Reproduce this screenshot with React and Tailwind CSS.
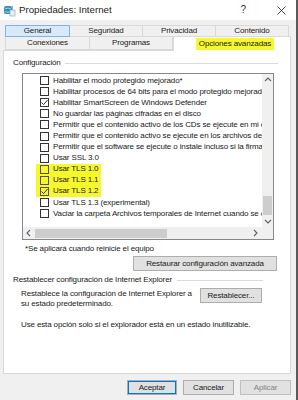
import React from 'react';

const rows = [
  { label: 'Habilitar el modo protegido mejorado*' },
  { label: 'Habilitar procesos de 64 bits para el modo protegido mejorado' },
  { label: 'Habilitar SmartScreen de Windows Defender', checked: true },
  { label: 'No guardar las páginas cifradas en el disco' },
  { label: 'Permitir que el contenido activo de los CDs se ejecute en mi equipo' },
  { label: 'Permitir que el contenido activo se ejecute en los archivos de mi equipo' },
  { label: 'Permitir que el software se ejecute o instale incluso si la firma no es válida' },
  { label: 'Usar SSL 3.0' },
  { label: 'Usar TLS 1.0', marked: true },
  { label: 'Usar TLS 1.1', marked: true },
  { label: 'Usar TLS 1.2', checked: true, marked: true },
  { label: 'Usar TLS 1.3 (experimental)' },
  { label: 'Vaciar la carpeta Archivos temporales de Internet cuando se cierre el explorador' },
];

const Check = ({ checked, marked }) => (
  <span
    className={`w-[9px] h-[9px] shrink-0 border flex items-center justify-center ${
      marked ? 'border-[#555522]' : 'border-[#333] bg-white'
    }`}
  >
    {checked && (
      <svg width="7" height="7" viewBox="0 0 7 7">
        <path d="M0.5 3.5 L2.6 5.6 L6.5 1" fill="none" stroke="#222" strokeWidth="0.9" />
      </svg>
    )}
  </span>
);

const Chevron = ({ dir }) => {
  const d = {
    up: 'M1 5 L4 2 L7 5',
    down: 'M1 2 L4 5 L7 2',
    left: 'M5 1 L2 4 L5 7',
    right: 'M2 1 L5 4 L2 7',
  }[dir];
  return (
    <svg width="8" height="8" viewBox="0 0 8 8">
      <path d={d} fill="none" stroke="#606060" strokeWidth="1.1" />
    </svg>
  );
};

const Button = ({ children, className = '' }) => (
  <div
    className={`h-[15px] flex items-center justify-center border border-[#adadad] bg-[#e1e1e1] ${className}`}
  >
    {children}
  </div>
);

export default function App() {
  return (
    <div
      className="w-[298px] h-[400px] bg-[#f0f0f0] flex overflow-hidden text-[8px] tracking-[-0.13px] text-[#1a1a1a] leading-none"
      style={{ fontFamily: '"Liberation Sans", Arial, sans-serif' }}
    >
      <div className="w-[296px] flex flex-col">
        {/* title bar */}
        <div className="h-[20px] bg-white flex items-center shrink-0">
          <svg className="ml-[3px]" width="13" height="13" viewBox="0 0 13 13">
            <rect x="1" y="2" width="9" height="8" fill="#9fb8c8" />
            <circle cx="5" cy="6" r="4" fill="#2a8fb8" />
            <path d="M2 5 Q5 3 8 5 M2 7.5 Q5 9 8 7.5" stroke="#bfe4f2" strokeWidth="0.8" fill="none" />
            <rect x="7" y="6" width="5" height="6" fill="#e8eef2" stroke="#8aa0b0" strokeWidth="0.6" />
          </svg>
          <span className="ml-[3px] text-[9.7px] tracking-normal text-[#222]">Propiedades: Internet</span>
          <span className="ml-auto text-[10px] text-[#333] mr-[31px]">?</span>
          <svg className="mr-[10px]" width="9" height="9" viewBox="0 0 9 9">
            <path d="M0.5 0.5 L8.5 8.5 M8.5 0.5 L0.5 8.5" stroke="#333" strokeWidth="0.9" />
          </svg>
        </div>

        {/* tabs */}
        <div className="pt-[5px] pl-[5px] shrink-0">
          <div className="flex h-[12px]">
            <div className="w-[65px] border border-[#7eb4ea] bg-[#d8eaf9] flex items-center justify-center">General</div>
            <div className="w-[73px] border-y border-r border-[#d9d9d9] bg-[#f0f0f0] flex items-center justify-center">Seguridad</div>
            <div className="w-[73px] border-y border-r border-[#d9d9d9] bg-[#f0f0f0] flex items-center justify-center">Privacidad</div>
            <div className="w-[73px] border-y border-r border-[#d9d9d9] bg-[#f0f0f0] flex items-center justify-center">Contenido</div>
          </div>
          <div className="flex h-[13px] items-end">
            <div className="w-[85px] h-[13px] border-x border-b border-[#d9d9d9] bg-[#f0f0f0] flex items-center justify-center">Conexiones</div>
            <div className="w-[83px] h-[13px] border-r border-b border-[#d9d9d9] bg-[#f0f0f0] flex items-center justify-center">Programas</div>
            <div className="w-[118px] h-[15px] -mb-[1px] relative z-10 border-x border-t border-[#d9d9d9] bg-white flex items-center justify-center">
              <span className="bg-[#f7f72e] px-[3px] py-[2px] ml-[6px]">Opciones avanzadas</span>
            </div>
          </div>
        </div>

        {/* panel */}
        <div className="ml-[3px] w-[288px] h-[324px] bg-white border border-[#d9d9d9] shrink-0 flex flex-col">
          <div className="flex items-center mt-[8px] ml-[9px] mr-[12px]">
            <span>Configuración</span>
            <div className="flex-1 h-px bg-[#dcdcdc] ml-[4px]" />
          </div>

          {/* listbox */}
          <div className="ml-[18px] mt-[6px] w-[252px] h-[167px] border border-[#828790] flex flex-col">
            <div className="flex flex-1 min-h-0">
              <div className="flex-1 overflow-hidden pt-[1px]">
                {rows.map((r) => (
                  <div key={r.label} className="h-[11.1px] flex items-center whitespace-nowrap">
                    <div
                      className={`ml-[13px] h-full flex items-center pl-[4px] pr-[3px] gap-[4px] ${
                        r.marked ? 'bg-[#f7f72e]' : ''
                      }`}
                    >
                      <Check checked={r.checked} marked={r.marked} />
                      <span>{r.label}</span>
                    </div>
                  </div>
                ))}
              </div>
              <div className="w-[11px] bg-[#f0f0f0] flex flex-col items-center">
                <div className="h-[11px] flex items-center justify-center"><Chevron dir="up" /></div>
                <div className="flex-1 flex flex-col justify-end pb-[1px]">
                  <div className="w-[9px] h-[19px] bg-[#cdcdcd]" />
                </div>
                <div className="h-[11px] flex items-center justify-center"><Chevron dir="down" /></div>
              </div>
            </div>
            <div className="h-[12px] flex bg-[#f0f0f0]">
              <div className="flex-1 flex items-center">
                <div className="w-[11px] flex justify-center"><Chevron dir="left" /></div>
                <div className="ml-[1px] w-[132px] h-[9px] bg-[#cdcdcd]" />
                <div className="ml-auto w-[11px] flex justify-center mr-[1px]"><Chevron dir="right" /></div>
              </div>
              <div className="w-[11px]" />
            </div>
          </div>

          <div className="ml-[21px] mt-[5px]">*Se aplicará cuando reinicie el equipo</div>

          <div className="flex justify-end mr-[13px] mt-[3px]">
            <Button className="w-[144px]">Restaurar configuración avanzada</Button>
          </div>

          <div className="flex items-center mt-[5px] ml-[9px] mr-[27px]">
            <span>Restablecer configuración de Internet Explorer</span>
            <div className="flex-1 h-px bg-[#dcdcdc] ml-[5px]" />
          </div>

          <div className="flex mt-[4px] ml-[17px] mr-[28px]">
            <div className="leading-[10px] mt-[1px]">
              Restablece la configuración de Internet Explorer a<br />su estado predeterminado.
            </div>
            <Button className="ml-auto w-[62px]">Restablecer...</Button>
          </div>

          <div className="ml-[17px] mt-[12px]">Use esta opción solo si el explorador está en un estado inutilizable.</div>
        </div>

        {/* footer */}
        <div className="flex justify-end gap-[6px] mt-[6px] pr-[5px]">
          <Button className="w-[50px] border-[#0078d7] ring-1 ring-inset ring-[#0078d7]">Aceptar</Button>
          <Button className="w-[51px]">Cancelar</Button>
          <Button className="w-[51px] bg-[#cccccc] border-[#bfbfbf] text-[#838383]">Aplicar</Button>
        </div>
      </div>
      <div className="w-[2px] bg-[#5a5a5a]" />
    </div>
  );
}
